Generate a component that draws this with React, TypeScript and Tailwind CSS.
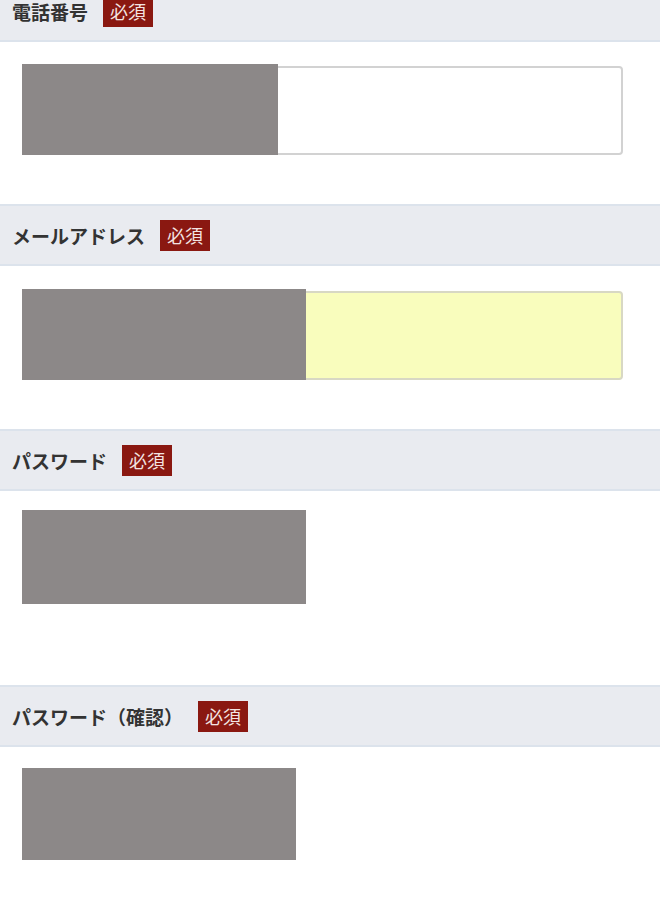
const font = {
  fontFamily: '"Noto Sans CJK JP", "Noto Sans", sans-serif',
};

function FieldHeader({ label }: { label: string }) {
  return (
    <div className="h-[62px] flex items-center pl-[12px] bg-[#e9ebf0] border-y-2 border-[#dce3ec]">
      <span className="text-[19px] leading-none font-bold text-[#333333]">{label}</span>
      <span className="ml-[15px] h-[31px] px-[7px] flex items-center bg-[#8a1811] text-[#f3e4e2] text-[18px] leading-none">
        必須
      </span>
    </div>
  );
}

function TextField({ bg, maskWidth }: { bg: string; maskWidth: string }) {
  return (
    <div className="relative">
      <div className={`h-[89px] rounded-[4px] border-2 border-[#d2d2d2] ${bg}`}></div>
      <div className={`absolute left-0 -top-[2px] h-[91px] bg-[#8c8888] ${maskWidth}`}></div>
    </div>
  );
}

export default function App() {
  return (
    <div className="bg-white min-h-[904px] overflow-hidden" style={font}>
      <div className="-mt-[20px]">
        {/* 電話番号 */}
        <FieldHeader label="電話番号" />
        <div className="pt-[24px] pb-[49px] pl-[22px] pr-[37px]">
          <TextField bg="bg-white" maskWidth="w-[256px]" />
        </div>

        {/* メールアドレス */}
        <FieldHeader label="メールアドレス" />
        <div className="pt-[25px] pb-[49px] pl-[22px] pr-[37px]">
          <TextField bg="bg-[#f9fdbd] border-[#d8d8c4]" maskWidth="w-[284px]" />
        </div>

        {/* パスワード */}
        <FieldHeader label="パスワード" />
        <div className="pt-[19px] pb-[81px] pl-[22px]">
          <div className="h-[94px] w-[284px] bg-[#8c8888]"></div>
        </div>

        {/* パスワード（確認） */}
        <FieldHeader label="パスワード（確認）" />
        <div className="pt-[21px] pb-[44px] pl-[22px]">
          <div className="h-[92px] w-[274px] bg-[#8c8888]"></div>
        </div>
      </div>
    </div>
  );
}
